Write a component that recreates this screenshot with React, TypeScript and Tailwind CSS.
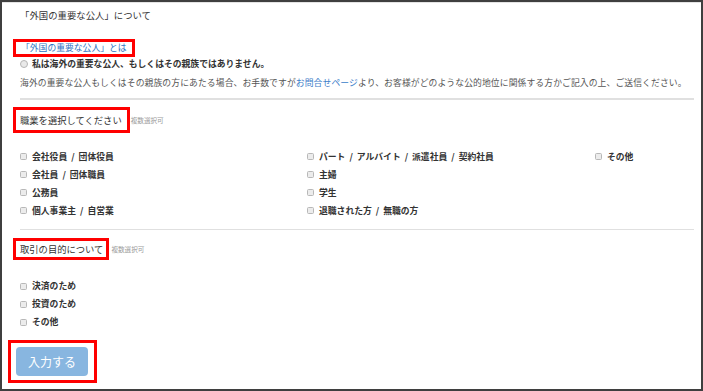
import React from 'react';

const occupations: string[][] = [
 ['会社役員 / 団体役員', '会社員 / 団体職員', '公務員', '個人事業主 / 自営業'],
 ['パート / アルバイト / 派遣社員 / 契約社員', '主婦', '学生', '退職された方 / 無職の方'],
 ['その他'],
];

const purposes = ['決済のため', '投資のため', 'その他'];

const Check: React.FC<{ label: string }> = ({ label }) => (
 <label className="flex items-center h-[18px] text-[8.8px] leading-[18px] font-bold text-[#333] whitespace-pre">
 <span className="w-[7px] h-[7px] rounded-[1.5px] border border-[#b8b8b8] bg-[#ececec] mr-[5px] shrink-0"></span>
 {label}
 </label>
);

export default function App() {
 return (
 <div
 className="w-[703px] h-[391px] bg-white border-2 border-[#3f3f3f] overflow-hidden"
 style={{ fontFamily: '"Noto Sans CJK JP", "Noto Sans", sans-serif' }}
 >
 <div className="h-full border-t border-[#e4e4e4] pl-[18px] pr-[7px] pt-[6px]">
 {/* Title */}
 <p className="text-[9.4px] leading-[12px] text-[#333]">「外国の重要な公人」について</p>

 {/* Heading 1 */}
 <div className="mt-[18px] -ml-[7px] inline-block border-[3px] border-[#ff0000] pl-[5px] pr-[5px]">
 <span className="block text-[8.8px] leading-[12px] text-[#2f73c2]">「外国の重要な公人」とは</span>
 </div>

 <label className="mt-[1px] flex items-center h-[12px] text-[8.8px] leading-[12px] font-bold text-[#333]">
 <span className="w-[8px] h-[8px] rounded-full border border-[#b5b5b5] bg-[#e9e9e9] mr-[4px] shrink-0"></span>
 私は海外の重要な公人、もしくはその親族ではありません。
 </label>

 <p className="mt-[7px] text-[8.8px] leading-[12px] tracking-[0.1px] text-[#555] whitespace-nowrap">
 海外の重要な公人もしくはその親族の方にあたる場合、お手数ですが
 <span className="text-[#3a7dc9]">お問合せページ</span>
 より、お客様がどのような公的地位に関係する方かご記入の上、ご送信ください。
 </p>

 <div className="mt-[9px] h-[1.5px] bg-[#e0e0e0]"></div>

 {/* Heading 2 */}
 <div className="mt-[7px] -ml-[7px] flex items-center">
 <div className="border-[3px] border-[#ff0000] pl-[4px] pr-[5px] py-[4px]">
 <span className="block text-[9.3px] leading-[12px] text-[#333]">職業を選択してください</span>
 </div>
 <span className="ml-[1px] mt-[2px] text-[6.6px] text-[#999]">複数選択可</span>
 </div>

 <div className="mt-[15px] grid grid-cols-[287px_288px_1fr]">
 {occupations.map((col, i) => (
 <div key={i} className="flex flex-col">
 {col.map((o) => (
 <Check key={o} label={o.replace(/ \/ /g, '  /  ')} />
 ))}
 </div>
 ))}
 </div>

 <div className="mt-[9px] h-[1.5px] bg-[#e0e0e0]"></div>

 {/* Heading 3 */}
 <div className="mt-[8px] -ml-[7px] flex items-center">
 <div className="border-[3px] border-[#ff0000] pl-[4px] pr-[3px] py-[2px]">
 <span className="block text-[9.3px] leading-[12px] text-[#333]">取引の目的について</span>
 </div>
 <span className="ml-[2px] mt-[2px] text-[6.6px] text-[#999]">複数選択可</span>
 </div>

 <div className="mt-[17px] flex flex-col">
 {purposes.map((p) => (
 <Check key={p} label={p} />
 ))}
 </div>

 {/* Submit */}
 <div className="mt-[9px] -ml-[12px] inline-block border-[3px] border-[#ff0000] pl-[5px] pr-[6px] py-[4px]">
 <button className="w-[72px] h-[29px] rounded-[4px] bg-[#88b6e0] text-white text-[12px] leading-[29px]">
 入力する
 </button>
 </div>
 </div>
 </div>
 );
}
